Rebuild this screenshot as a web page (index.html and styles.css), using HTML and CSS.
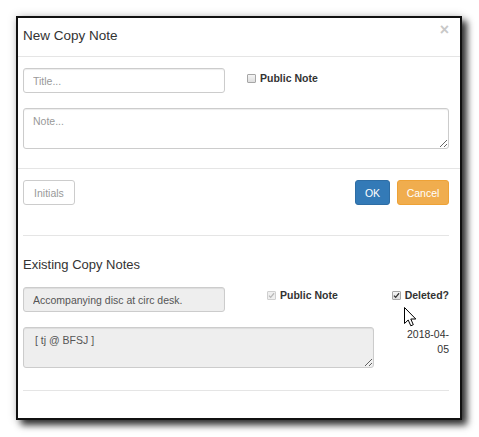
FILE: index.html
```html
<!DOCTYPE html>
<html>
<head>
<meta charset="utf-8">
<link rel="stylesheet" href="styles.css">
</head>
<body>
<div class="stage">
  <div class="modal">
    <div class="modal-header">
      <h4 class="modal-title">New Copy Note</h4>
      <span class="close">×</span>
    </div>
    <div class="modal-body">
      <div class="row-top">
        <input class="form-control title-input" type="text" placeholder="Title...">
        <label class="check"><span class="cb"></span>Public Note</label>
      </div>
      <textarea class="form-control note-input" placeholder="Note..."></textarea>
    </div>
    <div class="modal-footer">
      <div class="btn-row">
        <button class="btn btn-default">Initials</button>
        <div class="spacer"></div>
        <button class="btn btn-primary">OK</button>
        <button class="btn btn-warning">Cancel</button>
      </div>
      <hr class="sep">
      <h4 class="section-title">Existing Copy Notes</h4>
      <div class="note-row">
        <input class="form-control ro title-input" type="text" value="Accompanying disc at circ desk." readonly>
        <label class="check pub-existing"><span class="cb cb-disabled checked"><svg viewBox="0 0 9 9" width="7" height="7"><path d="M1.2 4.6 L3.4 6.8 L7.8 1.6" fill="none" stroke="#b8b8b8" stroke-width="1.6"/></svg></span>Public Note</label>
        <label class="check deleted"><span class="cb checked"><svg viewBox="0 0 9 9" width="7" height="7"><path d="M1.2 4.6 L3.4 6.8 L7.8 1.6" fill="none" stroke="#333" stroke-width="1.6"/></svg></span>Deleted?</label>
      </div>
      <div class="note-row2">
        <textarea class="form-control ro existing-note" readonly>[ tj @ BFSJ ]</textarea>
        <div class="date">2018-04-<br>05</div>
      </div>
      <hr class="sep sep-last">
    </div>
  </div>
  <svg class="cursor" width="13" height="20" viewBox="0 0 13 20"><path d="M0.5 0.5 L0.5 16.5 L4.2 13 L6.8 18.8 L9.3 17.7 L6.8 12 L11.8 12 Z" fill="#fff" stroke="#000" stroke-width="1" stroke-linejoin="miter"/></svg>
</div>
</body>
</html>
```

FILE: styles.css
```css
html, body {
  margin: 0;
  padding: 0;
  background: #fff;
}

body {
  font-family: "Liberation Sans", Arial, sans-serif;
  font-size: 10.5px;
  color: #333;
}

.stage {
  position: relative;
  width: 479px;
  height: 437px;
  padding: 16px 0 0 16px;
  box-sizing: border-box;
}

.modal {
  width: 446px;
  height: 404px;
  box-sizing: border-box;
  border: 2px solid #111;
  background: #fff;
  box-shadow: 5px 5px 7px rgba(0, 0, 0, 0.8), 0 0 9px rgba(0, 0, 0, 0.18);
}

.modal-header {
  height: 39px;
  box-sizing: border-box;
  border-bottom: 1px solid #e5e5e5;
  display: flex;
  align-items: flex-start;
  padding: 0 11px 0 5px;
}

.modal-title {
  margin: 10px 0 0 0;
  font-size: 13.5px;
  font-weight: normal;
  line-height: 15px;
  color: #333;
}

.close {
  margin-left: auto;
  margin-top: 4px;
  font-size: 16px;
  line-height: 16px;
  font-weight: bold;
  color: #c8c8c8;
}

.modal-body {
  padding: 11px 11px 19px 5px;
}

.row-top {
  display: flex;
  align-items: flex-start;
}

.form-control {
  display: block;
  box-sizing: border-box;
  border: 1px solid #ccc;
  border-radius: 3px;
  font-family: "Liberation Sans", Arial, sans-serif;
  font-size: 10.5px;
  color: #555;
  background: #fff;
  box-shadow: inset 0 1px 1px rgba(0, 0, 0, 0.075);
  outline: none;
  margin: 0;
}

.form-control::placeholder {
  color: #999;
}

.title-input {
  width: 202px;
  height: 25px;
  padding: 0 9px;
}

.check {
  display: flex;
  align-items: center;
  font-weight: bold;
  font-size: 10.5px;
  line-height: 15px;
  color: #333;
}

.row-top .check {
  margin-left: 22px;
  margin-top: 3px;
}

.cb {
  display: inline-flex;
  align-items: center;
  justify-content: center;
  width: 9px;
  height: 9px;
  box-sizing: border-box;
  border: 1px solid #a6a6a6;
  border-radius: 1px;
  background: linear-gradient(#f4f4f4, #dedede);
  margin-right: 4px;
}

.cb-disabled {
  border-color: #cfcfcf;
  background: #efefef;
}

.note-input {
  width: 426px;
  height: 41px;
  margin-top: 15px;
  padding: 6px 9px;
  resize: vertical;
}

.modal-footer {
  border-top: 1px solid #e5e5e5;
  padding: 11px 11px 0 5px;
}

.btn-row {
  display: flex;
  align-items: center;
  gap: 7px;
}

.spacer {
  flex: 1;
}

.btn {
  height: 25px;
  box-sizing: border-box;
  border: 1px solid transparent;
  border-radius: 3px;
  font-family: "Liberation Sans", Arial, sans-serif;
  font-size: 10.5px;
  padding: 0 9px;
  margin: 0;
}

.btn-default {
  width: 52px;
  background: #fff;
  border-color: #ccc;
  color: #999;
}

.btn-primary {
  width: 35px;
  background: #337ab7;
  border-color: #2e6da4;
  color: #fff;
  padding: 0;
}

.btn-warning {
  width: 52px;
  background: #f0ad4e;
  border-color: #eea236;
  color: #fff;
  padding: 0;
}

.sep {
  border: 0;
  border-top: 1px solid #e5e5e5;
  margin: 30px 0 0 0;
  height: 0;
}

.section-title {
  margin: 21px 0 0 0;
  font-size: 13px;
  font-weight: normal;
  line-height: 15px;
  color: #333;
}

.note-row {
  display: flex;
  align-items: flex-start;
  margin-top: 15px;
}

.ro {
  background: #eee;
  color: #555;
}

.pub-existing {
  margin-left: 42px;
  margin-top: 1px;
}

.deleted {
  margin-left: auto;
  margin-top: 1px;
}

.note-row2 {
  display: flex;
  align-items: flex-start;
  margin-top: 15px;
}

.existing-note {
  width: 351px;
  height: 41px;
  padding: 6px 11px;
  resize: vertical;
}

.date {
  margin-left: auto;
  text-align: right;
  line-height: 15px;
  color: #333;
}

.sep-last {
  margin-top: 22px;
}

.cursor {
  position: absolute;
  left: 404px;
  top: 307px;
}
```
